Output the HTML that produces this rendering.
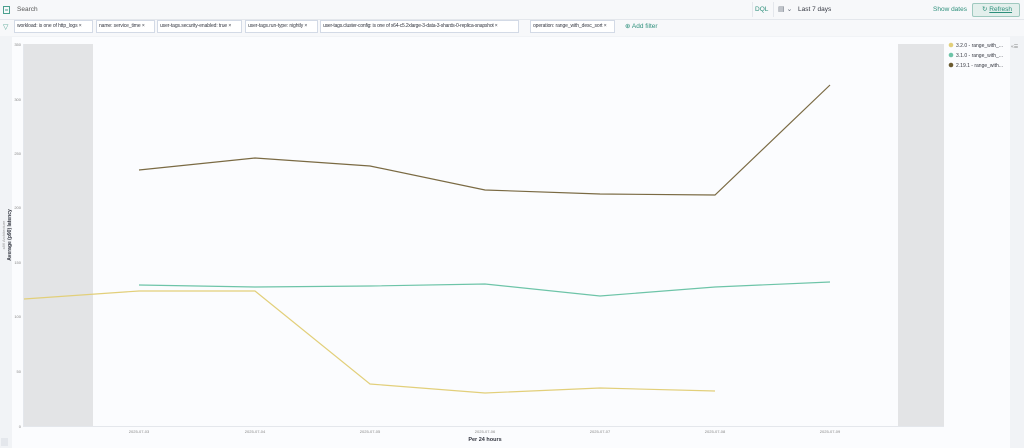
<!DOCTYPE html>
<html><head><meta charset="utf-8"><style>
*{margin:0;padding:0;box-sizing:border-box}
body{width:1024px;height:448px;overflow:hidden;background:#f1f3f6;font-family:"Liberation Sans",sans-serif;position:relative;color:#343741}
.top{position:absolute;left:0;top:0;width:1024px;height:20px;background:#f7f8fa;border-bottom:1px solid #e4e7ec}
.flt{position:absolute;top:20px;left:0;width:1024px;height:16px;background:#f7f8fa}
.pill{position:absolute;top:20px;height:13px;border:1px solid #d3dae6;background:#fff;font-size:5px;line-height:11px;padding:0 2px;color:#343741;white-space:nowrap;overflow:hidden;letter-spacing:-0.1px}
.panel{position:absolute;left:12px;top:37px;width:998px;height:411px;background:#fbfcfe}
.t{position:absolute;font-size:6px;white-space:nowrap}
</style></head><body>
<div class="top">
<svg style="position:absolute;left:3px;top:6px" width="7" height="8"><rect x="0.5" y="0.5" width="6" height="7" fill="none" stroke="#4aa08e" stroke-width="1"/><line x1="2" y1="4" x2="5" y2="4" stroke="#4aa08e"/></svg>
<div class="t" style="left:17px;top:6px;font-size:6.5px;color:#555">Search</div>
<div style="position:absolute;left:752px;top:2px;width:22px;height:15px;border-left:1px solid #e4e7ec;border-right:1px solid #e4e7ec"></div>
<div class="t" style="left:755px;top:6px;color:#2d8f7b;font-size:6.5px">DQL</div>
<div class="t" style="left:778px;top:5px;color:#69707d;font-size:7px">▤ ⌄</div>
<div class="t" style="left:798px;top:6px;font-size:6.5px">Last 7 days</div>
<div class="t" style="left:933px;top:6px;color:#2d8f7b;font-size:6.5px">Show dates</div>
<div style="position:absolute;left:972px;top:3px;width:48px;height:14px;border:1px solid #9fc9bf;background:#e3efec;border-radius:2px;font-size:6.5px;color:#2d8f7b;line-height:12px;padding-left:9px">↻ <u>Refresh</u></div>
</div>
<div class="flt"></div>
<div class="t" style="left:3px;top:23px;color:#4aa08e;font-size:7px">▽</div>
<div class="pill" style="left:14px;width:79px">workload: is one of http_logs ×</div>
<div class="pill" style="left:96px;width:59px">name: service_time ×</div>
<div class="pill" style="left:157px;width:85px">user-tags.security-enabled: true ×</div>
<div class="pill" style="left:245px;width:73px">user-tags.run-type: nightly ×</div>
<div class="pill" style="left:320px;width:199px;letter-spacing:-0.2px">user-tags.cluster-config: is one of x64-c5.2xlarge-3-data-3-shards-0-replica-snapshot ×</div>
<div class="pill" style="left:530px;width:85px">operation: range_with_desc_sort ×</div>
<div class="t" style="left:625px;top:22px;color:#2d8f7b;font-size:6.5px">⊕ Add filter</div>
<div class="panel"></div>
<div style="position:absolute;left:1010px;top:37px;width:14px;height:411px;background:#f1f3f6"></div>
<svg style="position:absolute;left:0;top:0" width="1024" height="448">
<rect x="24" y="44" width="69" height="382" fill="#e3e4e6"/>
<rect x="898" y="44" width="46" height="382" fill="#e3e4e6"/>
<line x1="24" y1="426.5" x2="944" y2="426.5" stroke="#e4e7ec"/>
<line x1="23.5" y1="44" x2="23.5" y2="427" stroke="#e4e7ec"/>
<g font-size="4" fill="#888" text-anchor="end" font-family="Liberation Sans">
<text x="21" y="46">350</text><text x="21" y="101">300</text><text x="21" y="155">250</text><text x="21" y="209">200</text><text x="21" y="264">150</text><text x="21" y="318">100</text><text x="21" y="373">50</text><text x="21" y="428">0</text></g>
<g font-size="4" fill="#888" text-anchor="middle" font-family="Liberation Sans">
<text x="139" y="433">2025-07-03</text><text x="255" y="433">2025-07-04</text><text x="370" y="433">2025-07-05</text><text x="485" y="433">2025-07-06</text><text x="600" y="433">2025-07-07</text><text x="715" y="433">2025-07-08</text><text x="830" y="433">2025-07-09</text>
<text x="485" y="441" font-size="5.5" fill="#343741" font-weight="bold">Per 24 hours</text></g>
<text transform="translate(11,235) rotate(-90)" font-size="5" font-weight="bold" fill="#343741" text-anchor="middle" font-family="Liberation Sans">Average (p90) latency</text>
<text transform="translate(5,235) rotate(-90)" font-size="4" fill="#999" text-anchor="middle" font-family="Liberation Sans">x86 Architecture</text>
<polyline fill="none" stroke="#7a6a43" stroke-width="1.2" points="139,170 255,158 370,166 485,190 600,194 715,195 830,85"/>
<polyline fill="none" stroke="#6dc4a8" stroke-width="1.2" points="139,285 255,287 370,286 485,284 600,296 715,287 830,282"/>
<polyline fill="none" stroke="#e2cf7a" stroke-width="1.2" points="24,299 139,291 255,291 370,384 485,393 600,388 715,391"/>
<circle cx="951" cy="45" r="2.3" fill="#e2cf7a"/><circle cx="951" cy="55" r="2.3" fill="#6dc4a8"/><circle cx="951" cy="65" r="2.3" fill="#6b5a2f"/>
<g font-size="5" fill="#343741" font-family="Liberation Sans"><text x="956" y="47">3.2.0 - range_with_...</text><text x="956" y="57">3.1.0 - range_with_...</text><text x="956" y="67">2.19.1 - range_with...</text></g>
<text x="1011" y="48" font-size="5" fill="#888">«☰</text>
<rect x="1" y="438" width="7" height="8" fill="#e4e7ec"/>
</svg>
</body></html>
